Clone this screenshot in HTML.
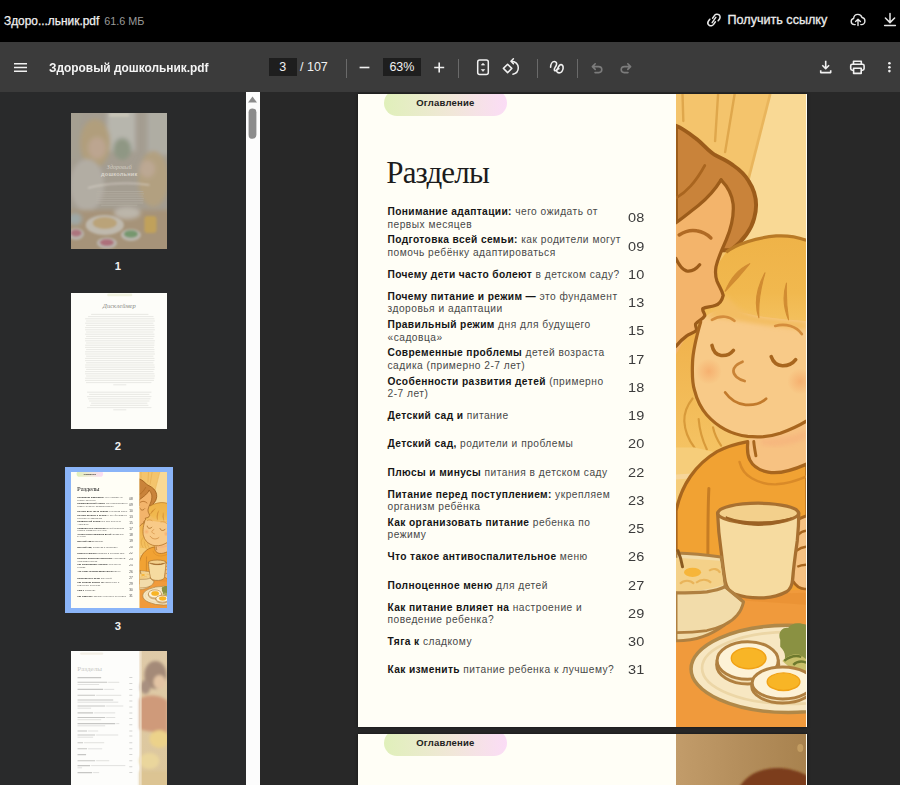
<!DOCTYPE html>
<html lang="ru"><head><meta charset="utf-8"><title>Здоровый дошкольник.pdf</title>
<style>
*{box-sizing:border-box;margin:0;padding:0}
html,body{width:900px;height:785px;overflow:hidden;background:#292929;font-family:"Liberation Sans",sans-serif;}
#topbar{position:absolute;left:0;top:0;width:900px;height:42px;background:#000;color:#fff}
#topbar .fn{position:absolute;left:4px;top:12.500px;font-size:11.900px;line-height:16px;color:#f2f2f2;white-space:nowrap;-webkit-text-stroke:.25px #f2f2f2}
#topbar .fn span{color:#9a9a9a;margin-left:5px;font-size:10.800px;-webkit-text-stroke:0}
#topbar .link{position:absolute;left:727.500px;top:12px;font-size:12.600px;line-height:16px;color:#ececec;white-space:nowrap;-webkit-text-stroke:.3px #ececec}
#toolbar{position:absolute;left:0;top:42px;width:900px;height:50px;background:#3b3b3b;color:#f1f1f1}
#toolbar .title{position:absolute;left:48.500px;top:18px;font-size:12.600px;font-weight:bold;line-height:16px;white-space:nowrap;color:#f4f4f4;transform:scaleX(.945);transform-origin:0 50%}
.box{position:absolute;background:#1e1e1e;color:#f1f1f1;font-size:12.5px;line-height:18px;text-align:center;height:18px}
.sep{position:absolute;width:1px;height:19px;background:#6a6a6a;top:17px}
.tt{position:absolute;font-size:12.500px;line-height:16px;color:#f1f1f1;white-space:nowrap}
#side{position:absolute;left:0;top:92px;width:246px;height:693px;background:#292a2b;overflow:hidden}
#sbar{position:absolute;left:246px;top:92px;width:13.5px;height:693px;background:#fcfcfc}
#main{position:absolute;left:259.5px;top:92px;width:640.5px;height:693px;background:#282828;overflow:hidden}
.thumb{position:absolute;left:70.5px;width:96.5px;height:136px;background:#fffef6;overflow:hidden}
.tn{position:absolute;left:0;width:236px;text-align:center;color:#f1f1f1;font-size:11.300px;font-weight:bold;line-height:14px}
.page{position:absolute;left:358px;width:448.500px;height:633px;box-shadow:0 0 3px rgba(0,0,0,.5);background:#fffef6;overflow:hidden}
.pill{position:absolute;left:25.700px;top:-3.800px;width:123.300px;height:26px;border-radius:13px;background:linear-gradient(90deg,#e0f0ba 0%,#f1e7d8 55%,#fbdcf6 100%)}
.pill span{position:absolute;left:0;width:100%;top:7.300px;text-align:center;font-size:9.5px;font-weight:bold;color:#222;line-height:12px;letter-spacing:.2px}
h1{position:absolute;left:28.300px;top:59.400px;font-family:"Liberation Serif",serif;font-weight:normal;font-size:31px;line-height:40px;color:#1c1c1c;letter-spacing:-.85px}
.row{position:absolute;left:29.5px;width:250px;font-size:10.2px;line-height:12.500px;color:#484848;white-space:nowrap;letter-spacing:.5px;display:flex;align-items:center;height:28px}
.row b{color:#151515;letter-spacing:.38px}
.num{position:absolute;left:269.800px;font-size:12.500px;color:#3c3c3c;line-height:16px;letter-spacing:.2px;transform:scaleX(1.16);transform-origin:0 50%}
.ill{position:absolute;left:318.200px;top:0;width:130.300px;height:633px;background:#f5b352;overflow:hidden}
.sel{position:absolute;left:65.300px;top:374.900px;width:107.300px;height:146.300px;background:#8ab4f8}
.page.mini{left:0;top:0;box-shadow:none;transform:scale(.2154,.2152);transform-origin:0 0}
</style></head><body>
<div id="topbar">
 <div class="fn">Здоро...льник.pdf<span>61.6 МБ</span></div>
 <div class="link">Получить ссылку</div>
<svg style="position:absolute;left:704px;top:10px" width="20" height="20" viewBox="0 0 20 20" fill="none" stroke="#e6e6e6" stroke-width="1.5" stroke-linecap="round" stroke-linejoin="round">
<path d="M8.6 8.2 L10.4 5.6 C11.4 4.1 13.4 3.7 14.8 4.7 C16.2 5.7 16.5 7.6 15.5 9 L14.2 10.8"/>
<path d="M11.4 11.8 L9.6 14.4 C8.6 15.9 6.6 16.3 5.2 15.3 C3.8 14.3 3.5 12.4 4.5 11 L5.8 9.2"/>
<path d="M8.2 12.6 L11.8 7.4"/>
</svg>
<svg style="position:absolute;left:849px;top:11px" width="18" height="18" viewBox="0 0 18 18" fill="none" stroke="#e6e6e6" stroke-width="1.4" stroke-linecap="round" stroke-linejoin="round">
<path d="M6.2 13.6 H5.4 C3.5 13.6 2.2 12.2 2.2 10.5 C2.2 9 3.2 7.8 4.6 7.5 C4.8 5.1 6.6 3.4 8.9 3.4 C10.9 3.4 12.5 4.7 13 6.5 C14.7 6.7 15.9 8.1 15.9 9.9 C15.9 12 14.4 13.6 12.5 13.6 H11.8"/>
<path d="M9 14.6 V8.4 M6.6 10.6 L9 8.2 L11.4 10.6"/>
</svg>
<svg style="position:absolute;left:882px;top:11px" width="16" height="18" viewBox="0 0 16 18" fill="none" stroke="#e6e6e6" stroke-width="1.5" stroke-linecap="round" stroke-linejoin="round">
<path d="M8 2.4 V11.2 M3.4 7 L8 11.6 L12.6 7 M2.6 14.4 H13.4"/>
</svg>

</div>
<div id="toolbar">
 <div class="title">Здоровый дошкольник.pdf</div>
 <div class="box" style="left:269px;top:16px;width:27.700px">3</div>
 <div class="tt" style="left:300px;top:17px">/ 107</div>
 <div class="sep" style="left:346px"></div>
 <div class="box" style="left:382.500px;top:16px;width:38.800px">63%</div>
 <div class="sep" style="left:458px"></div>
 <div class="sep" style="left:537px"></div>
 <div class="sep" style="left:577px"></div>
<svg style="position:absolute;left:12px;top:15px" width="18" height="20" viewBox="0 0 18 20" fill="none" stroke="#f1f1f1" stroke-width="1.6"><path d="M2 6.800 H15 M2 10.500 H15 M2 14.200 H15"/></svg>
<svg style="position:absolute;left:357px;top:15px" width="16" height="20" viewBox="0 0 16 20" fill="none" stroke="#f1f1f1" stroke-width="1.6"><path d="M2.6 10.5 H12.4"/></svg>
<svg style="position:absolute;left:431px;top:15px" width="16" height="20" viewBox="0 0 16 20" fill="none" stroke="#f1f1f1" stroke-width="1.6"><path d="M3.2 10.5 H13.2 M8.2 5.5 V15.5"/></svg>
<svg style="position:absolute;left:473px;top:15px" width="20" height="20" viewBox="0 0 20 20" fill="none" stroke="#f1f1f1" stroke-width="1.5" stroke-linejoin="round"><rect x="4.7" y="3" width="10.6" height="14.6" rx="2"/><path d="M8.3 8.1 L10 6.2 L11.7 8.1 Z M8.3 12.5 L10 14.4 L11.7 12.5 Z" fill="#f1f1f1" stroke-width=".6"/></svg>
<svg style="position:absolute;left:501px;top:15px" width="20" height="20" viewBox="0 0 20 20" fill="none" stroke="#f1f1f1" stroke-width="1.5" stroke-linejoin="round" stroke-linecap="round"><path d="M6.6 7.2 L10.8 11.4 L6.6 15.6 L2.4 11.4 Z"/><path d="M10.4 4.2 C14.4 4.2 17.3 7.2 17.3 10.8 C17.3 14 15 16.6 11.9 17.2"/><path d="M12.4 1.8 L10 4.2 L12.4 6.6"/></svg>
<svg style="position:absolute;left:547px;top:15px" width="20" height="20" viewBox="0 0 20 20" fill="none" stroke="#f1f1f1" stroke-width="1.6" stroke-linejoin="round" stroke-linecap="round"><path d="M3.6 10.2 C3.7 6.8 5.4 4.5 7.3 4.5 C9.3 4.5 10.1 6.2 9.3 8.200 C8.5 10.2 6.5 11.8 7.4 13.3 C8.4 14.9 10.5 12.4 11.5 9.9 C12.3 7.9 14 6.9 15.3 8.100 C16.7 9.5 16.3 12.8 14.7 14.700 C13.3 16.3 10.700 16.3 9.900 14.700 C9.300 13.400 10.300 12 11.900 11.700"/></svg>
<svg style="position:absolute;left:588px;top:15px" width="18" height="20" viewBox="0 0 18 20" fill="none" stroke="#7c7c7c" stroke-width="1.6" stroke-linejoin="round" stroke-linecap="round"><path d="M7.2 6.800 L4.400 9.600 L7.200 12.400 M4.600 9.600 H10.600 C12.600 9.600 13.800 11 13.800 12.600 C13.800 14.300 12.600 15.600 10.800 15.600 H7"/></svg>
<svg style="position:absolute;left:617px;top:15px" width="18" height="20" viewBox="0 0 18 20" fill="none" stroke="#7c7c7c" stroke-width="1.6" stroke-linejoin="round" stroke-linecap="round"><path d="M10.800 6.800 L13.600 9.600 L10.800 12.400 M13.400 9.600 H7.400 C5.400 9.600 4.200 11 4.200 12.600 C4.200 14.300 5.400 15.600 7.200 15.600 H11"/></svg>
<svg style="position:absolute;left:816px;top:15px" width="20" height="20" viewBox="0 0 20 20" fill="none" stroke="#f1f1f1" stroke-width="1.6" stroke-linejoin="round"><path d="M9.700 3.800 V11.600 M6.300 8.300 L9.700 11.700 L13.100 8.300 M4.700 13.200 V15.600 H14.700 V13.200"/></svg>
<svg style="position:absolute;left:847px;top:15px" width="20" height="20" viewBox="0 0 20 20" fill="none" stroke="#f1f1f1" stroke-width="1.6" stroke-linejoin="round"><path d="M6.500 7.200 V4.200 H14.300 V7.200"/><rect x="3.700" y="7.200" width="13.400" height="6" rx="1.600"/><rect x="6.600" y="11.200" width="7.600" height="5.200" fill="#3b3b3b"/></svg>
<svg style="position:absolute;left:880px;top:15px" width="18" height="20" viewBox="0 0 18 20" fill="#f1f1f1"><circle cx="9.400" cy="6.300" r="1.300"/><circle cx="9.400" cy="10.200" r="1.300"/><circle cx="9.400" cy="14.100" r="1.300"/></svg>

</div>
<div id="side">
 <div class="thumb" style="top:21.200px"><svg width="96.5" height="136" viewBox="0 0 96 136" preserveAspectRatio="none" style="display:block">
<defs><filter id="tb1" x="-20%" y="-20%" width="140%" height="140%"><feGaussianBlur stdDeviation="2.2"/></filter><filter id="tb2"><feGaussianBlur stdDeviation="1"/></filter></defs>
<rect width="96" height="136" fill="#a29a8e"/>
<g filter="url(#tb1)">
<rect x="36" y="-4" width="28" height="42" fill="#b5b4ab"/>
<rect x="76" y="-4" width="24" height="46" fill="#adaba1"/>
<rect x="-4" y="-4" width="14" height="50" fill="#a39c8e"/>
<ellipse cx="24" cy="30" rx="15" ry="24" fill="#af9b78"/>
<ellipse cx="26" cy="35" rx="9" ry="11" fill="#baa38d"/>
<ellipse cx="16" cy="72" rx="17" ry="26" fill="#b0aba1"/>
<ellipse cx="51" cy="36" rx="9" ry="11" fill="#8c9481"/>
<ellipse cx="82" cy="66" rx="15" ry="28" fill="#b09d7b"/>
<ellipse cx="76" cy="56" rx="8" ry="9" fill="#baa690"/>
<rect x="-4" y="97" width="104" height="44" fill="#a49075"/>
<ellipse cx="4" cy="106" rx="7" ry="6" fill="#9ba6a4"/>
<ellipse cx="56" cy="100" rx="13" ry="6" fill="#bab4a8"/>
</g>
<g filter="url(#tb2)">
<ellipse cx="33.6" cy="112" rx="19" ry="10" fill="#bdb7ab"/>
<ellipse cx="33.6" cy="110" rx="12" ry="6" fill="#b8a175"/>
<ellipse cx="5" cy="121" rx="8" ry="6" fill="#b5afa7"/><ellipse cx="5" cy="120" rx="5.5" ry="3.6" fill="#aa6f79"/>
<ellipse cx="35.7" cy="130" rx="10" ry="5.5" fill="#b8b2ab"/><ellipse cx="35.7" cy="129.5" rx="7" ry="3.5" fill="#ab6c77"/>
<ellipse cx="59.6" cy="122" rx="10" ry="6" fill="#b9b5ac"/><ellipse cx="59.6" cy="121" rx="7" ry="3.8" fill="#72946a"/>
<rect x="73" y="103" width="12" height="17" rx="3" fill="#be9e57"/>
<path d="M17 75 C35 70 60 69 78 72" stroke="#d6d0c6" stroke-width="1" fill="none"/>
<rect x="38" y="0.5" width="20" height="3" rx="1.5" fill="#cac6b8"/>
</g>
<rect width="96" height="136" fill="#fff" opacity=".03"/>
<text x="48" y="56.5" text-anchor="middle" font-family="'Liberation Serif',serif" font-style="italic" font-size="6" fill="#d2ccc2">Здоровый</text>
<text x="48" y="62.6" text-anchor="middle" font-family="'Liberation Sans',sans-serif" font-weight="bold" font-size="5.6" fill="#dad5cc" letter-spacing=".2">дошкольник</text>
<g stroke="#b7b1a6" stroke-width=".7" opacity=".8"><path d="M26 78.5H72M25 80.8H72.5M25 83.100H72M25 85.400H72.500M25 87.700H72M25 90H72M30 92.300H66"/></g>
</svg>
</div><div class="tn" style="top:167.400px">1</div>
 <div class="thumb" style="top:200.600px"><svg width="96.5" height="136" viewBox="0 0 96 136" preserveAspectRatio="none" style="display:block">
<rect width="96" height="136" fill="#fdfdf9"/>
<rect x="36" y="0.600" width="25" height="2.600" rx="1.300" fill="#f1f2df"/>
<text x="48" y="15.500" text-anchor="middle" font-family="'Liberation Serif',serif" font-style="italic" font-size="6.500" fill="#8b8b88">Дисклеймер</text>
<g stroke="#e3e3df" stroke-width=".8">
<path d="M20 21.400H77M17 23.600H82M14 25.800H83M15 28H83.500M14 30.200H82M15 32.400H83M14 34.600H83M14 36.800H83.500M15 39H82M14 41.200H83M15 43.400H83M14 45.600H82M14 47.800H83.500M15 50H83M14 52.200H83M14 54.400H82.500M15 56.600H83M14 58.800H83M14 61H83.500M15 63.200H82M14 65.400H83M14 67.600H83M15 69.800H82M14 72H83M14 74.200H83.500M15 76.400H83M14 78.600H82M14 80.800H83M15 83H83.500M14 85.200H83M14 87.400H82.500M15 89.600H80M42 91.800H55"/>
<path d="M16 99.200H80M18 101.400H78M16 103.600H80M17 105.800H79M18 108H78M20 110.200H76M19 112.400H77M16 114.600H80M42 116.800H55"/>
</g>
</svg>
</div><div class="tn" style="top:347px">2</div>
 <div class="sel"></div><div class="thumb" style="top:380px"><div class="page mini"><div class="pill"><span>Оглавление</span></div><h1>Разделы</h1><div class="row" style="top:111.0px"><div><b>Понимание адаптации:</b> чего ожидать от<br>первых месяцев</div></div><div class="num" style="top:116.7px">08</div>
<div class="row" style="top:139.2px"><div><b>Подготовка всей семьи:</b> как родители могут<br>помочь ребёнку адаптироваться</div></div><div class="num" style="top:144.9px">09</div>
<div class="row" style="top:167.4px"><div><b>Почему дети часто болеют</b> в детском саду?</div></div><div class="num" style="top:173.2px">10</div>
<div class="row" style="top:195.7px"><div><b>Почему питание и режим —</b> это фундамент<br>здоровья и адаптации</div></div><div class="num" style="top:201.4px">13</div>
<div class="row" style="top:223.9px"><div><b>Правильный режим</b> дня для будущего<br>«садовца»</div></div><div class="num" style="top:229.7px">15</div>
<div class="row" style="top:252.2px"><div><b>Современные проблемы</b> детей возраста<br>садика (примерно 2-7 лет)</div></div><div class="num" style="top:257.9px">17</div>
<div class="row" style="top:280.4px"><div><b>Особенности развития детей</b> (примерно<br>2-7 лет)</div></div><div class="num" style="top:286.2px">18</div>
<div class="row" style="top:308.7px"><div><b>Детский сад и</b> питание</div></div><div class="num" style="top:314.4px">19</div>
<div class="row" style="top:336.9px"><div><b>Детский сад,</b> родители и проблемы</div></div><div class="num" style="top:342.7px">20</div>
<div class="row" style="top:365.2px"><div><b>Плюсы и минусы</b> питания в детском саду</div></div><div class="num" style="top:370.9px">22</div>
<div class="row" style="top:393.4px"><div><b>Питание перед поступлением:</b> укрепляем<br>организм ребёнка</div></div><div class="num" style="top:399.2px">23</div>
<div class="row" style="top:421.7px"><div><b>Как организовать питание</b> ребенка по<br>режиму</div></div><div class="num" style="top:427.4px">25</div>
<div class="row" style="top:449.9px"><div><b>Что такое антивоспалительное</b> меню</div></div><div class="num" style="top:455.7px">26</div>
<div class="row" style="top:478.2px"><div><b>Полноценное меню</b> для детей</div></div><div class="num" style="top:483.9px">27</div>
<div class="row" style="top:506.5px"><div><b>Как питание влияет на</b> настроение и<br>поведение ребенка?</div></div><div class="num" style="top:512.2px">29</div>
<div class="row" style="top:534.7px"><div><b>Тяга к</b> сладкому</div></div><div class="num" style="top:540.5px">30</div>
<div class="row" style="top:563.0px"><div><b>Как изменить</b> питание ребенка к лучшему?</div></div><div class="num" style="top:568.7px">31</div>
<div class="ill"><svg width="130" height="632" viewBox="0 0 130 632" preserveAspectRatio="none" style="display:block;width:100%;height:100%">
<defs>
<linearGradient id="gBg" x1="0" y1="0" x2="1" y2="0"><stop offset="0" stop-color="#f4c46c"/><stop offset=".55" stop-color="#f3c069"/><stop offset="1" stop-color="#f1bd66"/></linearGradient>
<radialGradient id="gBl"><stop offset="0" stop-color="#f5a868" stop-opacity=".75"/><stop offset="1" stop-color="#f5a868" stop-opacity="0"/></radialGradient>
<filter id="bl1"><feGaussianBlur stdDeviation="2.2"/></filter>
<linearGradient id="gSh" x1="0" y1="0" x2="0" y2="1"><stop offset="0" stop-color="#f0b24c"/><stop offset=".45" stop-color="#f3bd5a"/><stop offset="1" stop-color="#f7cb70"/></linearGradient>
<linearGradient id="gCh" x1="0" y1="0" x2="0" y2="1"><stop offset="0" stop-color="#efb348"/><stop offset=".3" stop-color="#f1b84e"/><stop offset=".5" stop-color="#f4c362"/></linearGradient>
</defs>
<!-- curtain background -->
<rect width="130" height="632" fill="#f4c46c"/>
<path d="M94 0 L130 0 L130 160 L55 160 L71.5 88 Z" fill="#f9d995"/>
<path d="M42 0 L39 47 M58.5 0 L49 58 M6.5 0 L7.3 27" stroke="#dfa74c" stroke-width="2.4" fill="none" stroke-linecap="round"/>
<path d="M94 0 L71.5 88" stroke="#e9b55c" stroke-width="2.7" fill="none"/>
<!-- mother hair -->
<path d="M0 31.7 C8 35 14 40 20.6 45 C28 51 32 57 39 61 C45 64 52 67 57.3 71.4 C64 76 69 81 72.5 87 C79 97 82 110 78 124 C75 136 66 147 55 156 L0 156 Z" fill="#c9833a" stroke="#9c5c1a" stroke-width="3.9" stroke-linejoin="round"/>
<!-- child hair back -->
<path d="M50 158 C60 150 80 143.5 100 141.7 C112 141 122 143 130 146 L130 330 L16 330 L16.5 268 C18 250 21 238 24.6 227.5 L28.7 221.4 L26.7 214.3 L38.9 211.2 L47.1 201 L40.9 186.8 L39.9 172.5 Z" fill="url(#gCh)"/>
<path d="M50 158 C60 150 80 143.5 100 141.7 C112 141 122 143 130 146" stroke="#b97a26" stroke-width="3.24" fill="none"/>
<!-- child side hair left -->
<path d="M0 252 L10.4 241.8 L20.6 235.7 C19 246 16.5 256 16.5 268 L16.5 296 C20 310 24 318 31 321 L45 351 L40 358 L14 382 L0 416 Z" fill="url(#gSh)"/>
<!-- neck -->
<path d="M71.5 345 L130 328 L130 372 L92 379 L73 366 Z" fill="#f7c282"/>
<path d="M85 350 C100 354 118 350 130 344 L130 336 C115 342 100 345 85 344 Z" fill="#f6b07c" opacity=".6" filter="url(#bl1)"/>
<!-- child face -->
<path d="M24.6 227.5 C21 240 17 254 16.5 268 C16 280 16.5 290 18.5 296 C21 306 25 314 30.8 320.5 C41 332 56 340 71.5 341.9 C83 343 95 342 104.1 338.8 C114 335 123 331 130 326.6 L130 227 C124 226 118 226 112 225.5 C101 224 90 223 80 221.5 C68 219 58 216 49 215.5 C40 215 30 220 24.6 227.5 Z" fill="#f8ca88"/>
<path d="M49 200 C60 214 70 219 80 221.5 C95 225 115 226 130 227.5 L130 236 C110 232 90 232 70 228 C55 225 40 222 30 224 Z" fill="#f3bd62" filter="url(#bl1)"/>
<circle cx="32.8" cy="277" r="13" fill="url(#gBl)"/>
<circle cx="124" cy="287" r="13" fill="url(#gBl)"/>
<path d="M73.6 169.4 Q57 177 49.1 197 Q62 184 73.6 169.4Z M88.8 178.6 Q75.500 203 82.7 223.4 Q81.5 203 88.8 178.6Z M110.2 188.8 Q104.500 207 112.3 225.5 Q109.5 207 110.2 188.8Z" fill="#d18c32" stroke="#d18c32" stroke-width="1.1" stroke-linejoin="round"/>
<path d="M35.9 225.5 C40 223 44.5 222 49.1 222.4 C53 222.8 56 224.3 58.3 226.5 M99 231.6 C104 230.2 109.5 230.3 114.3 231.6 C119 233 123 236 125.5 239.7" stroke="#d48d3c" stroke-width="2.7" fill="none" stroke-linecap="round"/>
<path d="M35.9 251 C37 257 40.5 260.5 45 261.1 C50 261.6 54.5 259.5 57.3 256 M95 262.2 C97 268 101 271 106.2 271.3 C111.5 271.4 116.5 269 119.4 265.2" stroke="#a8661e" stroke-width="3.51" fill="none" stroke-linecap="round"/>
<path d="M66.4 267.3 C61 269.5 57.5 272.5 57.3 276.4 C57.2 281 62 285 68.5 286.6" stroke="#c98336" stroke-width="2.7" fill="none" stroke-linecap="round"/>
<path d="M49.1 298 C54 305 61 309.5 69.5 310.3 C77.5 311 85 308.5 89.9 304.2" stroke="#c27a2c" stroke-width="2.7" fill="none" stroke-linecap="round"/>
<!-- mother face -->
<path d="M45 85.7 C38 97 30 105 22.6 111 C15 117 8 123 0 128.5 L0 260 L10 242 L20.6 235.7 L19.6 229.6 L28.7 221.4 L26.7 214.3 L38.9 211.2 L47.1 201 L40.9 186.8 L39.9 172.5 C42 163 47 153 50 146 C55 134 58 122 57 110 C56 100 51 92 45 85.7 Z" fill="#f3b46b"/>
<path d="M45 85.7 C38 97 30 105 22.6 111 C15 117 8 123 0 128.5" stroke="#9c5c1a" stroke-width="3.24" fill="none" stroke-linecap="round"/>
<path d="M45 85.7 C51 92 56 100 57 110 C58 122 55 134 50 146 C47 153 42 163 39.9 172.5 C39 178 39.5 183 40.9 186.8 C43 192 46 196 47.1 201 C46 206 43 210 38.9 211.2 C34 213 30 212 26.7 214.3 C26 217 29 219 28.7 221.4 C27 225 22 226 19.6 229.6 C19 232 21 234 20.6 235.7 C18 239 13 239 10.4 241.8 C6 245 3 248 0 252" stroke="#9c5c1a" stroke-width="3.24" fill="none" stroke-linecap="round" stroke-linejoin="round"/>
<path d="M28.7 71.4 C24 80 19 87 14.5 92 C10 97 5 101 0 104" stroke="#a9651f" stroke-width="2.7" fill="none" stroke-linecap="round"/>
<path d="M3.2 140.7 C9 137 15 135.5 20.6 136.6 C26 137.5 31 140 34.8 143.7" stroke="#b06a24" stroke-width="3.51" fill="none" stroke-linecap="round"/>
<path d="M0 164.3 C3 171 6 175 10.4 176.6 C15 177.5 20 175 23.6 170.5" stroke="#9c5c1a" stroke-width="3.24" fill="none" stroke-linecap="round"/>
<!-- face outline -->
<path d="M24.6 227.5 C21 240 17 254 16.5 268 C16 280 16.5 290 18.5 296 C21 306 25 314 30.8 320.5 C41 332 56 340 71.5 341.9 C83 343 95 342 104.1 338.8 C114 335 123 331 130 326.6" stroke="#a8661e" stroke-width="3.24" fill="none" stroke-linecap="round"/>
<!-- left hair strands -->
<path d="M16.5 304 C11 311 8 318 8.3 326.6 C8.8 337 13 346 18.5 353 M22.6 324.5 C23.5 336 26.5 346 30.8 355 M36.9 332.7 C38.5 340 41.5 346 45 351" stroke="#d89a3a" stroke-width="2.16" fill="none" stroke-linecap="round"/>
<!-- left bg behind shoulder -->
<path d="M0 353 L18.5 353 L40 358 L14 382 L0 416 Z" fill="#f6cd7a"/>
<path d="M0 380 L16 379 L13 384 L0 385 Z" fill="#f6d59a"/>
<!-- shirt -->
<path d="M0 416.2 C3 402 8 391 14.5 381.6 C22 371 31 363 40.9 357.1 C50 352 61 349 71.5 347 L71.5 349 C71 355 71.5 361 73.6 365.3 C77 372 84 376 91.9 377.5 C104 380 118 375 130.6 369.4 L131 520 L0 520 Z" fill="#f1a233" stroke="#a8661e" stroke-width="3.24" stroke-linejoin="round"/>
<path d="M77.6 347 C78 352 79 357 79.7 361.2" stroke="#a8661e" stroke-width="2.97" fill="none" stroke-linecap="round"/>
<path d="M63.4 367.3 C65 374 69 380 75.6 383.6 C83 388 92 390 100 389.7 C111 389 121 386 130.6 381.6" stroke="#d98a28" stroke-width="2.43" fill="none" stroke-linecap="round"/>
<path d="M32.8 393.8 C32 410 31.8 430 31.8 460" stroke="#c77d24" stroke-width="2.97" fill="none" stroke-linecap="round"/>
<!-- table -->
<path d="M0 500 L131 495 L131 632 L0 632 Z" fill="#f09a3c"/>
<path d="M60 500 L131 498 L131 510 L70 506 Z" fill="#e88f30" opacity=".6"/>
<!-- fingers -->
<path d="M118 428 C122 424 127 422 131 421 L131 494 C125 495 120 492 116.5 486 Z" fill="#f6c282" stroke="#a8661e" stroke-width="2.7"/>
<path d="M122 440 C125 437 128 436 131 436 M120 456 C124 453 128 452 131 452 M121 472 C125 470 128 470 131 470" stroke="#a8661e" stroke-width="2.43" fill="none"/>
<!-- cup -->
<path d="M41.5 418.3 C42 432 43.5 446 45 456 C46.5 468 47.5 478 49.1 486.8 C50.5 494 54 498 59.3 499.5 C68 502.5 78 503.5 87.8 503 C96 502.5 104 500.5 110.2 497 C114 494.5 116 490 116.3 484.7 C117 476 119 460 121 446 C122 436 122.5 427 122.5 418.3 Z" fill="#f6dba0" stroke="#a87030" stroke-width="3.24" stroke-linejoin="round"/>
<ellipse cx="82" cy="418.6" rx="40.3" ry="10" fill="#f3d08c" stroke="#a87030" stroke-width="3.24"/>
<path d="M50 422.5 C58 428 70 430.5 82 430.5 C94 430.5 106 428.5 115 423.4 C106 426 94 427.5 82 427.5 C70 427.5 58 425.5 50 422.5 Z" fill="#9c6224" stroke="#9c6224" stroke-width="1.4" stroke-linejoin="round"/>
<!-- bowl -->
<path d="M0 458.2 C15 458.5 30 460 45 462.3 L49.1 491.9 L67.4 507.1 C66 513 64 517 61.3 520 C58 524 54 527 49.1 529.6 C43 534 35 539 26.7 541.8 C18 545 9 546 0 546 Z" fill="#f2dcaa" stroke="#b08040" stroke-width="2.97" stroke-linejoin="round"/>
<path d="M0 463 L44 466 L47.5 490 C33 495 16 497 0 497 Z" fill="#f4d189"/>
<ellipse cx="16.5" cy="477.6" rx="8.5" ry="4.6" fill="#f6b53a"/>
<path d="M4 489 C8 485 14 485 18 489 M20 488 C25 484 31 484 35 488 M33 476 C37 473 42 474 44 478" stroke="#e9b45a" stroke-width="2.16" fill="none"/>
<path d="M0 498 C11 498 21 497.8 30.8 497 C38 496 44 494.5 49.1 491.9 L67.4 507.1" stroke="#b08040" stroke-width="3.24" fill="none" stroke-linejoin="round"/>
<path d="M0 537.7 C11 537.6 21 537 30.8 535.7 C38 534 44 532 49.1 529.6" stroke="#b08040" stroke-width="2.7" fill="none"/>
<path d="M2 456 C4 461 5.5 466 6.5 472" stroke="#8a5a20" stroke-width="2.97" fill="none" stroke-linecap="round"/>
<!-- plate -->
<ellipse cx="112" cy="574" rx="97" ry="43.5" fill="#f7e7c2" stroke="#b08848" stroke-width="3.51"/>
<ellipse cx="114" cy="573" rx="88" ry="36" fill="none" stroke="#ecd6a6" stroke-width="2.7"/>
<!-- broccoli -->
<path d="M104 545 C101 538 106 532 112 533 C115 528 124 527 131 531 L131 572 L121 574 C119 568 113 566 108 566 C110 560 108 556 104 552 Z" fill="#8a9142"/>
<path d="M106 566 C112 560 118 558 124 560 L131 565 L131 580 L120 578 Z" fill="#c9c06a"/>
<path d="M108 566 C113 562 119 560 125 562 M117 570 C121 566 126 566 131 568" stroke="#6e7a2e" stroke-width="2.43" fill="none"/>
<!-- egg 1 -->
<ellipse cx="71.5" cy="569.5" rx="31" ry="19.6" fill="#f3dfb4" stroke="#b08040" stroke-width="2.97"/>
<ellipse cx="71.5" cy="565.6" rx="30.5" ry="18.8" fill="#fdf2d6" stroke="#b08040" stroke-width="2.97"/>
<ellipse cx="72.5" cy="563.4" rx="17.3" ry="10.4" fill="#f8b526" stroke="#f0a216" stroke-width="1.4"/>
<!-- egg 2 -->
<ellipse cx="106.5" cy="591" rx="31" ry="17" fill="#f3dfb4" stroke="#b08040" stroke-width="2.97"/>
<ellipse cx="106.5" cy="588" rx="30.5" ry="16" fill="#fdf2d6" stroke="#b08040" stroke-width="2.97"/>
<ellipse cx="107.3" cy="586.8" rx="16.3" ry="8.8" fill="#f8b526" stroke="#f0a216" stroke-width="1.4"/>
</svg>
</div></div></div><div class="tn" style="top:526.600px">3</div>
 <div class="thumb" style="top:559.400px"><svg width="96.500" height="136" viewBox="0 0 96 136" preserveAspectRatio="none" style="display:block">
<defs><filter id="t4b" x="-20%" y="-20%" width="140%" height="140%"><feGaussianBlur stdDeviation="1.6"/></filter>
<linearGradient id="t4g" x1="0" y1="0" x2="0" y2="1"><stop offset="0" stop-color="#dfcaa8"/><stop offset="1" stop-color="#dcc79c"/></linearGradient></defs>
<rect width="96" height="136" fill="#fdfdfb"/>
<rect x="68.300" y="0" width="27.700" height="136" fill="url(#t4g)"/>
<g filter="url(#t4b)">
<ellipse cx="84" cy="24" rx="11" ry="14" fill="#a48a78"/>
<ellipse cx="74" cy="36" rx="5" ry="7" fill="#a89080"/>
<ellipse cx="88" cy="31" rx="6" ry="7" fill="#e3c4a4"/>
<path d="M68.300 48 C76 42 90 44 96 50 L96 84 C88 80 78 82 68.300 78 Z" fill="#cf9a7a"/>
<ellipse cx="88" cy="88" rx="10" ry="9" fill="#ecd28a"/>
<ellipse cx="78" cy="110" rx="10" ry="8" fill="#ead69c"/>
<rect x="68.300" y="120" width="28" height="20" fill="#dcc493"/>
</g>
<rect x="68.300" y="0" width="2" height="136" fill="#f3e8d6" opacity=".7"/>
<rect x="9" y="1.400" width="23" height="2.400" rx="1.200" fill="#f3efe6"/>
<text x="6.300" y="20" font-family="'Liberation Serif',serif" font-size="7" fill="#c9c9c6">Разделы</text>
<g stroke="#c6c6c4" stroke-width="1.100">
<path d="M6.500 26.600H30M6.500 31.300H36M6.500 38.400H32M6.500 44.300H24M6.500 49H42M6.500 55H34M6.500 61.900H22M6.500 66.500H34M6.500 72.600H44M6.500 80H16M6.500 84H24M6.500 91.700H12M6.500 97.800H16M6.500 103.600H15M6.500 109.700H24M6.500 114.600H19M6.500 121.600H21"/></g>
<g stroke="#dededc" stroke-width=".9">
<path d="M37 31.300H48M6.500 33.500H28M33 38.400H43M25 44.300H50M6.500 51.200H47M35 55H52M6.500 57.200H20M23 61.900H44M35 66.500H44M6.500 68.700H30M45 72.600H48M6.500 74.800H34M17 80H27M25 84H47M6.500 86.200H22M13 91.700H33M17 97.800H31M25 109.700H38M20 114.600H54M6.500 116.800H11M22 121.600H28"/></g>
<g stroke="#d4d4d2" stroke-width="1"><path d="M58 26.600H61M58 32.400H61M58 38.400H61M58 44.300H61M58 50.100H61M58 56.100H61M58 61.900H61M58 67.600H61M58 73.700H61M58 80H61M58 85.100H61M58 91.700H61M58 97.800H61M58 103.600H61M58 109.700H61M58 115.700H61M58 121.600H61"/></g>
</svg>
</div>
</div>
<div id="sbar"><svg width="14" height="60" viewBox="0 0 14 60" style="position:absolute;left:0;top:0"><path d="M2 10.600 L6.500 4.600 L11 10.600 Z" fill="#8c8c8c"/><rect x="2.600" y="16.400" width="7.800" height="30.400" rx="3.900" fill="#8c8c8c"/></svg></div>
<div id="main"></div>
<div class="page" id="p3" style="top:93.700px">
 <div class="pill"><span>Оглавление</span></div>
 <h1>Разделы</h1>
<div class="row" style="top:111.0px"><div><b>Понимание адаптации:</b> чего ожидать от<br>первых месяцев</div></div><div class="num" style="top:116.7px">08</div>
<div class="row" style="top:139.2px"><div><b>Подготовка всей семьи:</b> как родители могут<br>помочь ребёнку адаптироваться</div></div><div class="num" style="top:144.9px">09</div>
<div class="row" style="top:167.4px"><div><b>Почему дети часто болеют</b> в детском саду?</div></div><div class="num" style="top:173.2px">10</div>
<div class="row" style="top:195.7px"><div><b>Почему питание и режим —</b> это фундамент<br>здоровья и адаптации</div></div><div class="num" style="top:201.4px">13</div>
<div class="row" style="top:223.9px"><div><b>Правильный режим</b> дня для будущего<br>«садовца»</div></div><div class="num" style="top:229.7px">15</div>
<div class="row" style="top:252.2px"><div><b>Современные проблемы</b> детей возраста<br>садика (примерно 2-7 лет)</div></div><div class="num" style="top:257.9px">17</div>
<div class="row" style="top:280.4px"><div><b>Особенности развития детей</b> (примерно<br>2-7 лет)</div></div><div class="num" style="top:286.2px">18</div>
<div class="row" style="top:308.7px"><div><b>Детский сад и</b> питание</div></div><div class="num" style="top:314.4px">19</div>
<div class="row" style="top:336.9px"><div><b>Детский сад,</b> родители и проблемы</div></div><div class="num" style="top:342.7px">20</div>
<div class="row" style="top:365.2px"><div><b>Плюсы и минусы</b> питания в детском саду</div></div><div class="num" style="top:370.9px">22</div>
<div class="row" style="top:393.4px"><div><b>Питание перед поступлением:</b> укрепляем<br>организм ребёнка</div></div><div class="num" style="top:399.2px">23</div>
<div class="row" style="top:421.7px"><div><b>Как организовать питание</b> ребенка по<br>режиму</div></div><div class="num" style="top:427.4px">25</div>
<div class="row" style="top:449.9px"><div><b>Что такое антивоспалительное</b> меню</div></div><div class="num" style="top:455.7px">26</div>
<div class="row" style="top:478.2px"><div><b>Полноценное меню</b> для детей</div></div><div class="num" style="top:483.9px">27</div>
<div class="row" style="top:506.5px"><div><b>Как питание влияет на</b> настроение и<br>поведение ребенка?</div></div><div class="num" style="top:512.2px">29</div>
<div class="row" style="top:534.7px"><div><b>Тяга к</b> сладкому</div></div><div class="num" style="top:540.5px">30</div>
<div class="row" style="top:563.0px"><div><b>Как изменить</b> питание ребенка к лучшему?</div></div><div class="num" style="top:568.7px">31</div>

 <div class="ill"><svg width="130" height="632" viewBox="0 0 130 632" preserveAspectRatio="none" style="display:block;width:100%;height:100%">
<defs>
<linearGradient id="gBg" x1="0" y1="0" x2="1" y2="0"><stop offset="0" stop-color="#f4c46c"/><stop offset=".55" stop-color="#f3c069"/><stop offset="1" stop-color="#f1bd66"/></linearGradient>
<radialGradient id="gBl"><stop offset="0" stop-color="#f5a868" stop-opacity=".75"/><stop offset="1" stop-color="#f5a868" stop-opacity="0"/></radialGradient>
<filter id="bl1"><feGaussianBlur stdDeviation="2.2"/></filter>
<linearGradient id="gSh" x1="0" y1="0" x2="0" y2="1"><stop offset="0" stop-color="#f0b24c"/><stop offset=".45" stop-color="#f3bd5a"/><stop offset="1" stop-color="#f7cb70"/></linearGradient>
<linearGradient id="gCh" x1="0" y1="0" x2="0" y2="1"><stop offset="0" stop-color="#efb348"/><stop offset=".3" stop-color="#f1b84e"/><stop offset=".5" stop-color="#f4c362"/></linearGradient>
</defs>
<!-- curtain background -->
<rect width="130" height="632" fill="#f4c46c"/>
<path d="M94 0 L130 0 L130 160 L55 160 L71.5 88 Z" fill="#f9d995"/>
<path d="M42 0 L39 47 M58.5 0 L49 58 M6.5 0 L7.3 27" stroke="#dfa74c" stroke-width="2.4" fill="none" stroke-linecap="round"/>
<path d="M94 0 L71.5 88" stroke="#e9b55c" stroke-width="2.7" fill="none"/>
<!-- mother hair -->
<path d="M0 31.7 C8 35 14 40 20.6 45 C28 51 32 57 39 61 C45 64 52 67 57.3 71.4 C64 76 69 81 72.5 87 C79 97 82 110 78 124 C75 136 66 147 55 156 L0 156 Z" fill="#c9833a" stroke="#9c5c1a" stroke-width="3.9" stroke-linejoin="round"/>
<!-- child hair back -->
<path d="M50 158 C60 150 80 143.5 100 141.7 C112 141 122 143 130 146 L130 330 L16 330 L16.5 268 C18 250 21 238 24.6 227.5 L28.7 221.4 L26.7 214.3 L38.9 211.2 L47.1 201 L40.9 186.8 L39.9 172.5 Z" fill="url(#gCh)"/>
<path d="M50 158 C60 150 80 143.5 100 141.7 C112 141 122 143 130 146" stroke="#b97a26" stroke-width="3.24" fill="none"/>
<!-- child side hair left -->
<path d="M0 252 L10.4 241.8 L20.6 235.7 C19 246 16.5 256 16.5 268 L16.5 296 C20 310 24 318 31 321 L45 351 L40 358 L14 382 L0 416 Z" fill="url(#gSh)"/>
<!-- neck -->
<path d="M71.5 345 L130 328 L130 372 L92 379 L73 366 Z" fill="#f7c282"/>
<path d="M85 350 C100 354 118 350 130 344 L130 336 C115 342 100 345 85 344 Z" fill="#f6b07c" opacity=".6" filter="url(#bl1)"/>
<!-- child face -->
<path d="M24.6 227.5 C21 240 17 254 16.5 268 C16 280 16.5 290 18.5 296 C21 306 25 314 30.8 320.5 C41 332 56 340 71.5 341.9 C83 343 95 342 104.1 338.8 C114 335 123 331 130 326.6 L130 227 C124 226 118 226 112 225.5 C101 224 90 223 80 221.5 C68 219 58 216 49 215.5 C40 215 30 220 24.6 227.5 Z" fill="#f8ca88"/>
<path d="M49 200 C60 214 70 219 80 221.5 C95 225 115 226 130 227.5 L130 236 C110 232 90 232 70 228 C55 225 40 222 30 224 Z" fill="#f3bd62" filter="url(#bl1)"/>
<circle cx="32.8" cy="277" r="13" fill="url(#gBl)"/>
<circle cx="124" cy="287" r="13" fill="url(#gBl)"/>
<path d="M73.6 169.4 Q57 177 49.1 197 Q62 184 73.6 169.4Z M88.8 178.6 Q75.500 203 82.7 223.4 Q81.5 203 88.8 178.6Z M110.2 188.8 Q104.500 207 112.3 225.5 Q109.5 207 110.2 188.8Z" fill="#d18c32" stroke="#d18c32" stroke-width="1.1" stroke-linejoin="round"/>
<path d="M35.9 225.5 C40 223 44.5 222 49.1 222.4 C53 222.8 56 224.3 58.3 226.5 M99 231.6 C104 230.2 109.5 230.3 114.3 231.6 C119 233 123 236 125.5 239.7" stroke="#d48d3c" stroke-width="2.7" fill="none" stroke-linecap="round"/>
<path d="M35.9 251 C37 257 40.5 260.5 45 261.1 C50 261.6 54.5 259.5 57.3 256 M95 262.2 C97 268 101 271 106.2 271.3 C111.5 271.4 116.5 269 119.4 265.2" stroke="#a8661e" stroke-width="3.51" fill="none" stroke-linecap="round"/>
<path d="M66.4 267.3 C61 269.5 57.5 272.5 57.3 276.4 C57.2 281 62 285 68.5 286.6" stroke="#c98336" stroke-width="2.7" fill="none" stroke-linecap="round"/>
<path d="M49.1 298 C54 305 61 309.5 69.5 310.3 C77.5 311 85 308.5 89.9 304.2" stroke="#c27a2c" stroke-width="2.7" fill="none" stroke-linecap="round"/>
<!-- mother face -->
<path d="M45 85.7 C38 97 30 105 22.6 111 C15 117 8 123 0 128.5 L0 260 L10 242 L20.6 235.7 L19.6 229.6 L28.7 221.4 L26.7 214.3 L38.9 211.2 L47.1 201 L40.9 186.8 L39.9 172.5 C42 163 47 153 50 146 C55 134 58 122 57 110 C56 100 51 92 45 85.7 Z" fill="#f3b46b"/>
<path d="M45 85.7 C38 97 30 105 22.6 111 C15 117 8 123 0 128.5" stroke="#9c5c1a" stroke-width="3.24" fill="none" stroke-linecap="round"/>
<path d="M45 85.7 C51 92 56 100 57 110 C58 122 55 134 50 146 C47 153 42 163 39.9 172.5 C39 178 39.5 183 40.9 186.8 C43 192 46 196 47.1 201 C46 206 43 210 38.9 211.2 C34 213 30 212 26.7 214.3 C26 217 29 219 28.7 221.4 C27 225 22 226 19.6 229.6 C19 232 21 234 20.6 235.7 C18 239 13 239 10.4 241.8 C6 245 3 248 0 252" stroke="#9c5c1a" stroke-width="3.24" fill="none" stroke-linecap="round" stroke-linejoin="round"/>
<path d="M28.7 71.4 C24 80 19 87 14.5 92 C10 97 5 101 0 104" stroke="#a9651f" stroke-width="2.7" fill="none" stroke-linecap="round"/>
<path d="M3.2 140.7 C9 137 15 135.5 20.6 136.6 C26 137.5 31 140 34.8 143.7" stroke="#b06a24" stroke-width="3.51" fill="none" stroke-linecap="round"/>
<path d="M0 164.3 C3 171 6 175 10.4 176.6 C15 177.5 20 175 23.6 170.5" stroke="#9c5c1a" stroke-width="3.24" fill="none" stroke-linecap="round"/>
<!-- face outline -->
<path d="M24.6 227.5 C21 240 17 254 16.5 268 C16 280 16.5 290 18.5 296 C21 306 25 314 30.8 320.5 C41 332 56 340 71.5 341.9 C83 343 95 342 104.1 338.8 C114 335 123 331 130 326.6" stroke="#a8661e" stroke-width="3.24" fill="none" stroke-linecap="round"/>
<!-- left hair strands -->
<path d="M16.5 304 C11 311 8 318 8.3 326.6 C8.8 337 13 346 18.5 353 M22.6 324.5 C23.5 336 26.5 346 30.8 355 M36.9 332.7 C38.5 340 41.5 346 45 351" stroke="#d89a3a" stroke-width="2.16" fill="none" stroke-linecap="round"/>
<!-- left bg behind shoulder -->
<path d="M0 353 L18.5 353 L40 358 L14 382 L0 416 Z" fill="#f6cd7a"/>
<path d="M0 380 L16 379 L13 384 L0 385 Z" fill="#f6d59a"/>
<!-- shirt -->
<path d="M0 416.2 C3 402 8 391 14.5 381.6 C22 371 31 363 40.9 357.1 C50 352 61 349 71.5 347 L71.5 349 C71 355 71.5 361 73.6 365.3 C77 372 84 376 91.9 377.5 C104 380 118 375 130.6 369.4 L131 520 L0 520 Z" fill="#f1a233" stroke="#a8661e" stroke-width="3.24" stroke-linejoin="round"/>
<path d="M77.6 347 C78 352 79 357 79.7 361.2" stroke="#a8661e" stroke-width="2.97" fill="none" stroke-linecap="round"/>
<path d="M63.4 367.3 C65 374 69 380 75.6 383.6 C83 388 92 390 100 389.7 C111 389 121 386 130.6 381.6" stroke="#d98a28" stroke-width="2.43" fill="none" stroke-linecap="round"/>
<path d="M32.8 393.8 C32 410 31.8 430 31.8 460" stroke="#c77d24" stroke-width="2.97" fill="none" stroke-linecap="round"/>
<!-- table -->
<path d="M0 500 L131 495 L131 632 L0 632 Z" fill="#f09a3c"/>
<path d="M60 500 L131 498 L131 510 L70 506 Z" fill="#e88f30" opacity=".6"/>
<!-- fingers -->
<path d="M118 428 C122 424 127 422 131 421 L131 494 C125 495 120 492 116.5 486 Z" fill="#f6c282" stroke="#a8661e" stroke-width="2.7"/>
<path d="M122 440 C125 437 128 436 131 436 M120 456 C124 453 128 452 131 452 M121 472 C125 470 128 470 131 470" stroke="#a8661e" stroke-width="2.43" fill="none"/>
<!-- cup -->
<path d="M41.5 418.3 C42 432 43.5 446 45 456 C46.5 468 47.5 478 49.1 486.8 C50.5 494 54 498 59.3 499.5 C68 502.5 78 503.5 87.8 503 C96 502.5 104 500.5 110.2 497 C114 494.5 116 490 116.3 484.7 C117 476 119 460 121 446 C122 436 122.5 427 122.5 418.3 Z" fill="#f6dba0" stroke="#a87030" stroke-width="3.24" stroke-linejoin="round"/>
<ellipse cx="82" cy="418.6" rx="40.3" ry="10" fill="#f3d08c" stroke="#a87030" stroke-width="3.24"/>
<path d="M50 422.5 C58 428 70 430.5 82 430.5 C94 430.5 106 428.5 115 423.4 C106 426 94 427.5 82 427.5 C70 427.5 58 425.5 50 422.5 Z" fill="#9c6224" stroke="#9c6224" stroke-width="1.4" stroke-linejoin="round"/>
<!-- bowl -->
<path d="M0 458.2 C15 458.5 30 460 45 462.3 L49.1 491.9 L67.4 507.1 C66 513 64 517 61.3 520 C58 524 54 527 49.1 529.6 C43 534 35 539 26.7 541.8 C18 545 9 546 0 546 Z" fill="#f2dcaa" stroke="#b08040" stroke-width="2.97" stroke-linejoin="round"/>
<path d="M0 463 L44 466 L47.5 490 C33 495 16 497 0 497 Z" fill="#f4d189"/>
<ellipse cx="16.5" cy="477.6" rx="8.5" ry="4.6" fill="#f6b53a"/>
<path d="M4 489 C8 485 14 485 18 489 M20 488 C25 484 31 484 35 488 M33 476 C37 473 42 474 44 478" stroke="#e9b45a" stroke-width="2.16" fill="none"/>
<path d="M0 498 C11 498 21 497.8 30.8 497 C38 496 44 494.5 49.1 491.9 L67.4 507.1" stroke="#b08040" stroke-width="3.24" fill="none" stroke-linejoin="round"/>
<path d="M0 537.7 C11 537.6 21 537 30.8 535.7 C38 534 44 532 49.1 529.6" stroke="#b08040" stroke-width="2.7" fill="none"/>
<path d="M2 456 C4 461 5.5 466 6.5 472" stroke="#8a5a20" stroke-width="2.97" fill="none" stroke-linecap="round"/>
<!-- plate -->
<ellipse cx="112" cy="574" rx="97" ry="43.5" fill="#f7e7c2" stroke="#b08848" stroke-width="3.51"/>
<ellipse cx="114" cy="573" rx="88" ry="36" fill="none" stroke="#ecd6a6" stroke-width="2.7"/>
<!-- broccoli -->
<path d="M104 545 C101 538 106 532 112 533 C115 528 124 527 131 531 L131 572 L121 574 C119 568 113 566 108 566 C110 560 108 556 104 552 Z" fill="#8a9142"/>
<path d="M106 566 C112 560 118 558 124 560 L131 565 L131 580 L120 578 Z" fill="#c9c06a"/>
<path d="M108 566 C113 562 119 560 125 562 M117 570 C121 566 126 566 131 568" stroke="#6e7a2e" stroke-width="2.43" fill="none"/>
<!-- egg 1 -->
<ellipse cx="71.5" cy="569.5" rx="31" ry="19.6" fill="#f3dfb4" stroke="#b08040" stroke-width="2.97"/>
<ellipse cx="71.5" cy="565.6" rx="30.5" ry="18.8" fill="#fdf2d6" stroke="#b08040" stroke-width="2.97"/>
<ellipse cx="72.5" cy="563.4" rx="17.3" ry="10.4" fill="#f8b526" stroke="#f0a216" stroke-width="1.4"/>
<!-- egg 2 -->
<ellipse cx="106.5" cy="591" rx="31" ry="17" fill="#f3dfb4" stroke="#b08040" stroke-width="2.97"/>
<ellipse cx="106.5" cy="588" rx="30.5" ry="16" fill="#fdf2d6" stroke="#b08040" stroke-width="2.97"/>
<ellipse cx="107.3" cy="586.8" rx="16.3" ry="8.8" fill="#f8b526" stroke="#f0a216" stroke-width="1.4"/>
</svg>
</div>
</div>
<div class="page" id="p4" style="top:733.800px">
 <div class="pill"><span>Оглавление</span></div>
 <div class="ill"><svg width="130" height="632" viewBox="0 0 130 632" preserveAspectRatio="none" style="display:block;width:100%;height:100%">
<defs><linearGradient id="p4g" x1="0" y1="0" x2="1" y2="0.1"><stop offset="0" stop-color="#c29c6a"/><stop offset=".5" stop-color="#b48e5c"/><stop offset="1" stop-color="#a8824e"/></linearGradient>
<filter id="p4b"><feGaussianBlur stdDeviation="1.2"/></filter></defs>
<rect width="130" height="632" fill="url(#p4g)"/>
<path d="M60 60 C66 42 84 33 104 34 C116 35 125 38 131 42 L131 70 L60 70 Z" fill="#7c3d1a" filter="url(#p4b)"/>
<ellipse cx="124" cy="14" rx="3" ry="4" fill="#cfa86a" opacity=".7"/>
</svg>
</div>
</div>
</body></html>
